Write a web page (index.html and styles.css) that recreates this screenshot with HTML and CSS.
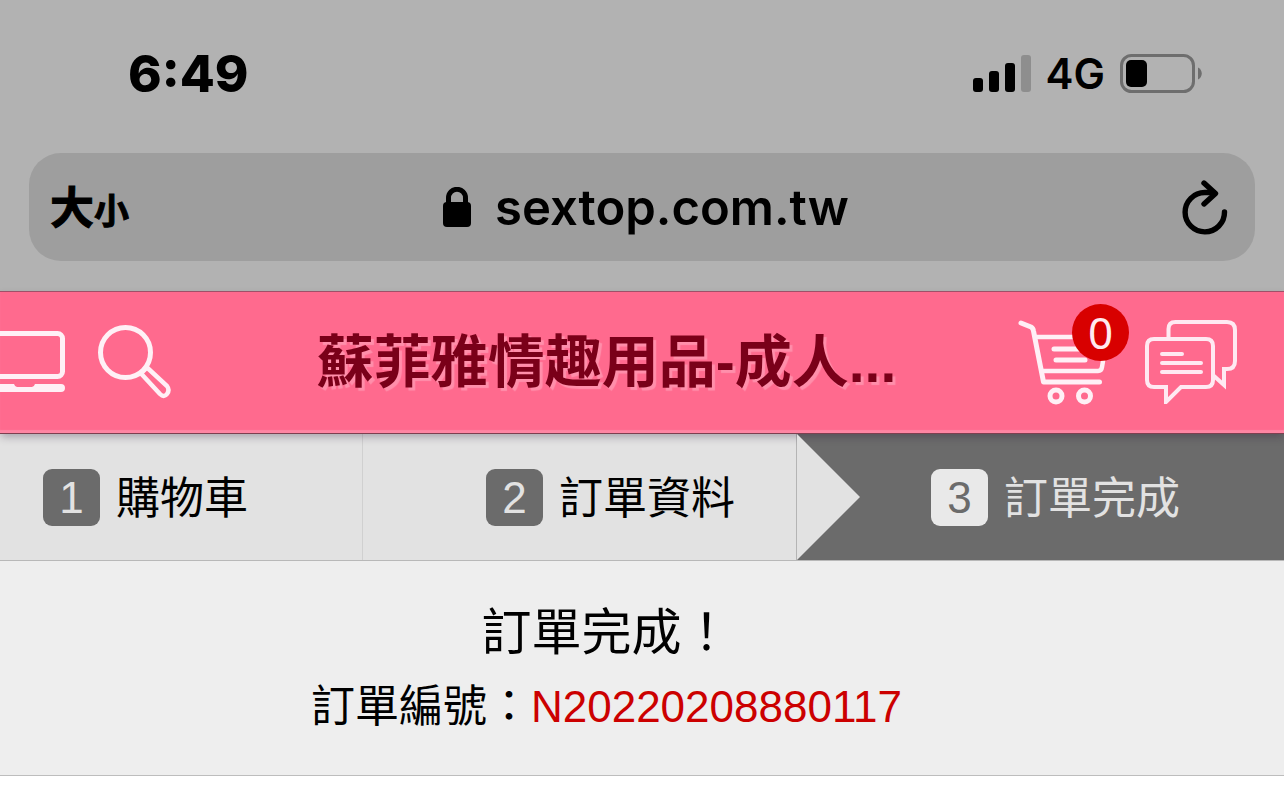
FILE: index.html
```
<!DOCTYPE html>
<html lang="zh-Hant">
<head>
<meta charset="utf-8">
<meta name="viewport" content="width=device-width">
<title>訂單完成</title>
<link rel="stylesheet" href="styles.css">
</head>
<body>
<div class="browser">
  <div class="status">
    <time class="clock">6:49</time>
    <div class="indicators">
      <svg class="signal" width="58" height="38" viewBox="0 0 58 38" aria-hidden="true">
        <rect x="0" y="23" width="10" height="14" rx="3"/>
        <rect x="16" y="16" width="10" height="21" rx="3"/>
        <rect x="32" y="8" width="10" height="29" rx="3"/>
        <rect x="48" y="0" width="10" height="37" rx="3" fill="#8e8e8e"/>
      </svg>
      <span class="network">4G</span>
      <svg class="battery" width="82" height="40" viewBox="0 0 82 40" aria-hidden="true">
        <rect x="1.5" y="1.5" width="72" height="36" rx="10" fill="none" stroke="#6e6e6e" stroke-width="3"/>
        <rect x="6" y="6" width="21" height="27" rx="5"/>
        <path d="M78 13.500c5 2 5 10 0 12z" fill="#6e6e6e"/>
      </svg>
    </div>
  </div>
  <div class="address">
    <button class="text-size" type="button"><span class="big">大</span><span class="small">小</span></button>
    <div class="site">
      <svg width="28" height="40" viewBox="0 0 28 40" aria-hidden="true">
        <rect x="0" y="15" width="28" height="25" rx="4"/>
        <path d="M5.500 18v-7a8.500 8.700 0 0 1 17 0v7" fill="none" stroke="#000" stroke-width="5"/>
      </svg>
      <span>sextop.com.tw</span>
    </div>
    <button class="reload" type="button" aria-label="重新載入">
      <svg width="46" height="56" viewBox="0 0 46 56" fill="none" stroke="#000" stroke-width="5.400" stroke-linecap="round" stroke-linejoin="round" aria-hidden="true">
        <path d="M42.500 33a19.700 19.700 0 1 1-19.700-19.500h9"/>
        <path d="M22 4l11.500 10.500L22 25"/>
      </svg>
    </button>
  </div>
</div>
<header class="shop">
  <nav class="tools">
    <a href="#" aria-label="電腦版">
      <svg width="65" height="62" viewBox="0 0 65 62" aria-hidden="true">
        <rect x="-40" y="2.500" width="102.500" height="43" rx="5" fill="none" stroke="#fff0f6" stroke-width="5"/>
        <path d="M0 53h14q1 3 3 3h15q2 0 3-3h26a4 4 0 0 1 0 8H0z" fill="#fff0f6"/>
      </svg>
    </a>
    <a href="#" aria-label="搜尋">
      <svg width="73" height="74" viewBox="0 0 73 74" fill="none" stroke="#fff0f6" stroke-width="5" aria-hidden="true">
        <circle cx="27.500" cy="27.500" r="25"/>
        <path d="M43 48.500L62 69q4 4 7 0t0-8L49 42.500" stroke-width="4.500"/>
        <path d="M43 48.500L49 42.500" stroke-width="4.500"/>
      </svg>
    </a>
  </nav>
  <h1>蘇菲雅情趣用品-成人...</h1>
  <nav class="tools">
    <a class="cart" href="#" aria-label="購物車">
      <svg width="90" height="86" viewBox="0 0 90 86" fill="none" stroke="#fff0f6" stroke-width="5" stroke-linecap="round" stroke-linejoin="round" aria-hidden="true">
        <path d="M3 4l10 4q2 1 2.500 4l10 51h56"/>
        <path d="M17 18h72l-5 30q-.5 4-4 4H25" stroke-width="4.500"/>
        <path d="M36 30h35M38 41h29"/>
        <circle cx="38" cy="77" r="6"/><circle cx="66.500" cy="77" r="6"/>
      </svg>
      <span class="count">0</span>
    </a>
    <a href="#" aria-label="訊息">
      <svg width="92" height="84" viewBox="0 0 92 84" fill="none" stroke="#ffe9f2" stroke-width="4" stroke-linecap="round" stroke-linejoin="miter" aria-hidden="true">
        <path d="M9 19h52q7 0 7 7v34q0 7-7 7H36L21 82V67H9q-7 0-7-7V26q0-7 7-7z"/>
        <path d="M23.500 18V9q0-7 7-7H82q8 0 8 8v31q0 8-8 8h-3v16L69 56"/>
        <path d="M17 34h20M17 43h39M17 52h39"/>
      </svg>
    </a>
  </nav>
</header>
<main>
  <ol class="steps">
    <li class="step first"><span class="num">1</span><span class="label">購物車</span></li>
    <li class="step second"><span class="num">2</span><span class="label">訂單資料</span></li>
    <li class="step current" aria-current="step"><span class="num">3</span><span class="label">訂單完成</span></li>
  </ol>
  <section class="result">
    <h2>訂單完成！</h2>
    <p>訂單編號：<span class="order">N20220208880117</span></p>
  </section>
</main>
</body>
</html>
```

FILE: styles.css
```
* { box-sizing: border-box; }
body {
  margin: 0;
  background: #fff;
  color: #000;
  font-family: "Liberation Sans", "Noto Sans CJK TC", sans-serif;
}
button {
  border: 0;
  padding: 0;
  background: none;
  color: inherit;
}
svg { display: block; flex: none; }
.browser {
  background: #b2b2b2;
  padding: 0 29px 30px;
  font-family: Inter, "Noto Sans CJK TC", sans-serif;
}
.status {
  display: flex;
  align-items: center;
  justify-content: space-between;
  height: 153px;
  padding: 0 53px 6px 99px;
}
.clock { font-size: 51px; font-weight: 800; }
.indicators { display: flex; align-items: center; gap: 15px; }
.network { font-size: 42px; font-weight: 600; }
.address {
  display: grid;
  grid-template-columns: 1fr auto 1fr;
  align-items: center;
  height: 108px;
  padding: 0 27px 0 21px;
  border-radius: 32px;
  background: #9e9e9e;
}
.text-size {
  display: flex;
  align-items: baseline;
  justify-self: start;
  font-family: "Noto Sans CJK TC", sans-serif;
  font-weight: 700;
  line-height: 60px;
  -webkit-text-stroke: 1px #000;
}
.big { font-size: 44px; }
.small { font-size: 35px; }
.site {
  display: flex;
  align-items: center;
  gap: 24px;
  padding-left: 14px;
  font-size: 49px;
  font-weight: 600;
}
.reload { justify-self: end; }
.shop {
  position: relative;
  display: flex;
  align-items: center;
  justify-content: space-between;
  height: 143px;
  padding: 0 47px 2px 0;
  border-top: 1px solid #a05068;
  border-bottom: 1px solid #7d3f50;
  background: #ff6a8e;
  box-shadow: inset 0 -3px 1px #ff85a3, 0 4px 8px -1px rgba(40, 20, 50, .3);
}
.tools { display: flex; align-items: center; }
.tools:first-child { gap: 33px; }
.tools:last-child { gap: 37px; }
.shop h1 {
  margin: 0;
  padding-left: 24px;
  color: #7a0019;
  font-size: 57px;
  font-weight: 700;
  line-height: 80px;
  white-space: nowrap;
  text-shadow: 3px 3px 1px #ff8fab;
}
.cart { position: relative; }
.count {
  position: absolute;
  top: -15px;
  right: -21px;
  width: 57px;
  height: 57px;
  border-radius: 50%;
  background: #d80000;
  color: #ffe9ef;
  font-family: "Noto Sans", sans-serif;
  font-size: 44px;
  line-height: 57px;
  text-align: center;
}
.steps {
  display: grid;
  grid-template-columns: 363fr 434fr 487fr;
  margin: 0;
  padding: 0;
  border-bottom: 1px solid #b8b8b8;
  list-style: none;
  font-size: 44px;
  line-height: 64px;
}
.step {
  display: flex;
  align-items: center;
  gap: 16px;
  height: 126px;
  background: #e2e2e2;
  white-space: nowrap;
}
.label { padding-top: 4px; }
.first { padding-left: 43px; border-right: 1px solid #d0d0d0; }
.second { padding-left: 123px; border-right: 1px solid #b4b4b4; }
.current { background: #6b6b6b; color: #e2e2e2; }
.current::before {
  content: "";
  width: 63px;
  height: 126px;
  margin-right: 55px;
  background: #e2e2e2;
  clip-path: polygon(0 0, 100% 50%, 0 100%);
}
.num {
  width: 57px;
  border-radius: 9px;
  background: #6b6b6b;
  color: #e2e2e2;
  line-height: 57px;
  text-align: center;
}
.current .num { background: #e9e9e9; color: #6b6b6b; }
.result {
  padding: 35px 71px 31px 0;
  border-bottom: 1px solid #bdbdbd;
  background: #eee;
  text-align: center;
}
.result h2 {
  margin: 0;
  font-size: 50px;
  font-weight: 400;
  line-height: 74px;
}
.result p { margin: 0; font-size: 44px; line-height: 74px; }
.order { color: #cc0000; }
```
